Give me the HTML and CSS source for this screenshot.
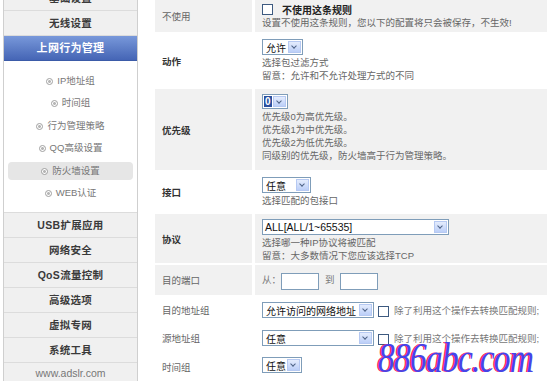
FILE: index.html
```html
<!DOCTYPE html>
<html lang="zh-CN">
<head>
  <meta charset="UTF-8">
  <title>防火墙设置</title>
  <link rel="stylesheet" href="styles.css">
</head>
<body>
  <div class="page">
    <!-- Sidebar -->
    <div class="sidebar">
      <div class="nav-item">基础设置</div>
      <div class="nav-item">无线设置</div>
      <div class="nav-item active">上网行为管理</div>
      <div class="submenu">
        <div class="sub-item"><span class="ring"></span>IP地址组</div>
        <div class="sub-item"><span class="ring"></span>时间组</div>
        <div class="sub-item"><span class="ring"></span>行为管理策略</div>
        <div class="sub-item"><span class="ring"></span>QQ高级设置</div>
        <div class="sub-item current"><span class="ring"></span>防火墙设置</div>
        <div class="sub-item"><span class="ring"></span>WEB认证</div>
      </div>
      <div class="nav-item">USB扩展应用</div>
      <div class="nav-item">网络安全</div>
      <div class="nav-item">QoS流量控制</div>
      <div class="nav-item">高级选项</div>
      <div class="nav-item">虚拟专网</div>
      <div class="nav-item">系统工具</div>
      <div class="nav-foot">www.adslr.com</div>
    </div>

    <!-- Rule form -->
    <div class="content">
      <div class="row gray r1">
        <div class="label">不使用</div>
        <div class="value">
          <div class="check-line"><span class="checkbox"></span><b>不使用这条规则</b></div>
          <p>设置不使用这条规则，您以下的配置将只会被保存，不生效!</p>
        </div>
      </div>

      <div class="row r2">
        <div class="label strong">动作</div>
        <div class="value">
          <div class="sel w40"><span class="txt">允许</span><span class="arr"></span></div>
          <p>选择包过滤方式</p>
          <p>留意：允许和不允许处理方式的不同</p>
        </div>
      </div>

      <div class="row gray r3">
        <div class="label strong">优先级</div>
        <div class="value">
          <div class="sel small w23"><span class="txt"><span class="picked">0</span></span><span class="arr"></span></div>
          <p>优先级0为高优先级。</p>
          <p>优先级1为中优先级。</p>
          <p>优先级2为低优先级。</p>
          <p>同级别的优先级，防火墙高于行为管理策略。</p>
        </div>
      </div>

      <div class="row r4">
        <div class="label strong">接口</div>
        <div class="value">
          <div class="sel w48"><span class="txt">任意</span><span class="arr"></span></div>
          <p>选择匹配的包接口</p>
        </div>
      </div>

      <div class="row gray r5">
        <div class="label strong">协议</div>
        <div class="value">
          <div class="sel w186"><span class="txt latin">ALL[ALL/1~65535]</span><span class="arr"></span></div>
          <p>选择哪一种IP协议将被匹配</p>
          <p>留意：大多数情况下您应该选择TCP</p>
        </div>
      </div>

      <div class="row gray r6">
        <div class="label">目的端口</div>
        <div class="value inline">
          <span class="muted">从：</span><span class="input"></span>
          <span class="muted to">到</span><span class="input"></span>
        </div>
      </div>

      <div class="row r7">
        <div class="label">目的地址组</div>
        <div class="value inline">
          <div class="sel w111"><span class="txt">允许访问的网络地址</span><span class="arr"></span></div>
          <span class="checkbox"></span><span class="muted">除了利用这个操作去转换匹配规则;</span>
        </div>
      </div>

      <div class="row r8">
        <div class="label">源地址组</div>
        <div class="value inline">
          <div class="sel w111"><span class="txt">任意</span><span class="arr"></span></div>
          <span class="checkbox"></span><span class="muted">除了利用这个操作去转换匹配规则;</span>
        </div>
      </div>

      <div class="row r9">
        <div class="label">时间组</div>
        <div class="value inline">
          <div class="sel w38"><span class="txt">任意</span><span class="arr"></span></div>
        </div>
      </div>
    </div>

    <div class="watermark">886abc.com</div>
  </div>
</body>
</html>
```

FILE: styles.css
```css
body {
  margin: 0;
  background-color: #fff;
  font-family: "Liberation Sans", "Noto Sans CJK SC", sans-serif;
  height: 381px;
  overflow: hidden;
}

.page {
  position: relative;
  display: flex;
  align-items: flex-start;
}

/* Sidebar */
.sidebar {
  width: 133px;
  margin: -14px 0 0 3px;
  border-left: 1px solid #cfcfcf;
  border-right: 1px solid #cfcfcf;
  background-color: #fff;
}

.nav-item {
  height: 24px;
  line-height: 24px;
  border-bottom: 1px solid #dcdcdc;
  background-color: #f0f0f0;
  text-align: center;
  font-size: 10.5px;
  font-weight: bold;
  color: #3a3a3a;
  letter-spacing: 0.3px;
}

.nav-item.active {
  background: linear-gradient(#7898da, #4565b5);
  border-bottom-color: #3b5ba8;
  color: #fff;
  font-size: 11px;
}

.submenu {
  display: flex;
  flex-direction: column;
  gap: 4.4px;
  height: 152px;
  box-sizing: border-box;
  padding: 11px 4px;
  border-bottom: 1px solid #dcdcdc;
}

.sub-item {
  height: 18px;
  line-height: 18px;
  text-align: center;
  font-size: 9.5px;
  color: #777;
  border-radius: 4px;
}

.sub-item.current {
  background-color: #e6e6e6;
}

.ring {
  display: inline-block;
  width: 5px;
  height: 5px;
  margin-right: 4px;
  vertical-align: -1px;
  border: 1.5px solid #a0a0a0;
  border-radius: 50%;
  background: radial-gradient(circle, #b5b5b5 35%, #fff 45%);
}

.nav-foot {
  height: 20px;
  line-height: 20px;
  background-color: #f0f0f0;
  text-align: center;
  font-size: 10.5px;
  color: #777;
}

/* Form */
.content {
  width: 392px;
  margin-left: 17px;
}

.row {
  display: flex;
  gap: 3px;
  margin-bottom: 2px;
  box-sizing: border-box;
}

.row.gray .label,
.row.gray .value {
  background-color: #f1f1f1;
}

.r1 { height: 32px; }
.r2 { height: 53px; }
.r3 { height: 81px; }
.r4 { height: 40px; }
.r5 { height: 49px; }
.r6 { height: 30px; }
.r7 { height: 26px; }
.r8 { height: 25px; }
.r9 { height: 29px; }

.label {
  width: 97px;
  flex-shrink: 0;
  display: flex;
  align-items: center;
  padding-left: 7px;
  box-sizing: border-box;
  font-size: 9.5px;
  color: #666;
}

.label.strong {
  font-weight: bold;
  color: #333;
}

.value {
  flex: 1;
  padding: 5px 0 0 7px;
  box-sizing: border-box;
  font-size: 9.5px;
  color: #666;
}

.r1 .value {
  padding-top: 3px;
}

.value p {
  margin: 0;
  line-height: 13px;
}

.value.inline {
  display: flex;
  align-items: flex-start;
}

.check-line {
  display: flex;
  align-items: center;
  height: 12px;
  margin-bottom: 1px;
}

.check-line b {
  margin-left: 9px;
  color: #222;
  font-size: 10px;
}

.checkbox {
  display: inline-block;
  width: 9px;
  height: 9px;
  border: 1px solid #3d5a80;
  background-color: #fff;
  flex-shrink: 0;
}

.value.inline .checkbox {
  margin: 4px 5px 0 4px;
}

.sel {
  display: flex;
  height: 16px;
  margin-bottom: 1px;
  border: 1px solid #7f9db9;
  background-color: #fff;
  box-sizing: border-box;
}

.sel.small {
  height: 15px;
}

.sel .txt {
  flex: 1;
  display: flex;
  align-items: center;
  padding-left: 3px;
  font-size: 10px;
  color: #111;
  white-space: nowrap;
  overflow: hidden;
}

.sel .txt.latin {
  font-size: 10.5px;
  padding-left: 2px;
}

.sel .picked {
  padding: 0 1px;
  line-height: 11px;
  font-size: 10px;
  background-color: #2a4f9e;
  color: #fff;
  font-weight: bold;
}

.sel.small .txt {
  padding-left: 1px;
  overflow: visible;
}

.sel .arr {
  width: 11px;
  flex-shrink: 0;
  margin: 1px;
  border: 1px solid #b6c9f2;
  background: linear-gradient(#e4ecfd, #bccff8);
  position: relative;
}

.sel .arr::after {
  content: "";
  position: absolute;
  left: 3px;
  top: 2px;
  width: 3px;
  height: 3px;
  border-right: 1.5px solid #4d6185;
  border-bottom: 1.5px solid #4d6185;
  transform: rotate(45deg);
}

.w23 { width: 26px; }
.w38 { width: 40px; }
.w40 { width: 41px; }
.w48 { width: 49px; }
.w111 { width: 112px; }
.w186 { width: 187px; }

.muted {
  line-height: 18px;
  color: #777;
}

.muted.to {
  margin: 0 5px 0 6px;
}

.input {
  display: inline-block;
  width: 38px;
  height: 17px;
  margin-top: 2px;
  border: 1px solid #7f9db9;
  background-color: #fff;
  box-sizing: border-box;
}

.r6 .value {
  padding-top: 6px;
}

/* Watermark */
.watermark {
  position: absolute;
  left: 378px;
  top: 333px;
  font-family: "Liberation Serif", serif;
  font-style: italic;
  font-size: 43px;
  letter-spacing: -1px;
  color: #4545e8;
  text-shadow: -2px 0 #ff2d55;
  transform: scaleX(0.78);
  transform-origin: left top;
  white-space: nowrap;
}
```
